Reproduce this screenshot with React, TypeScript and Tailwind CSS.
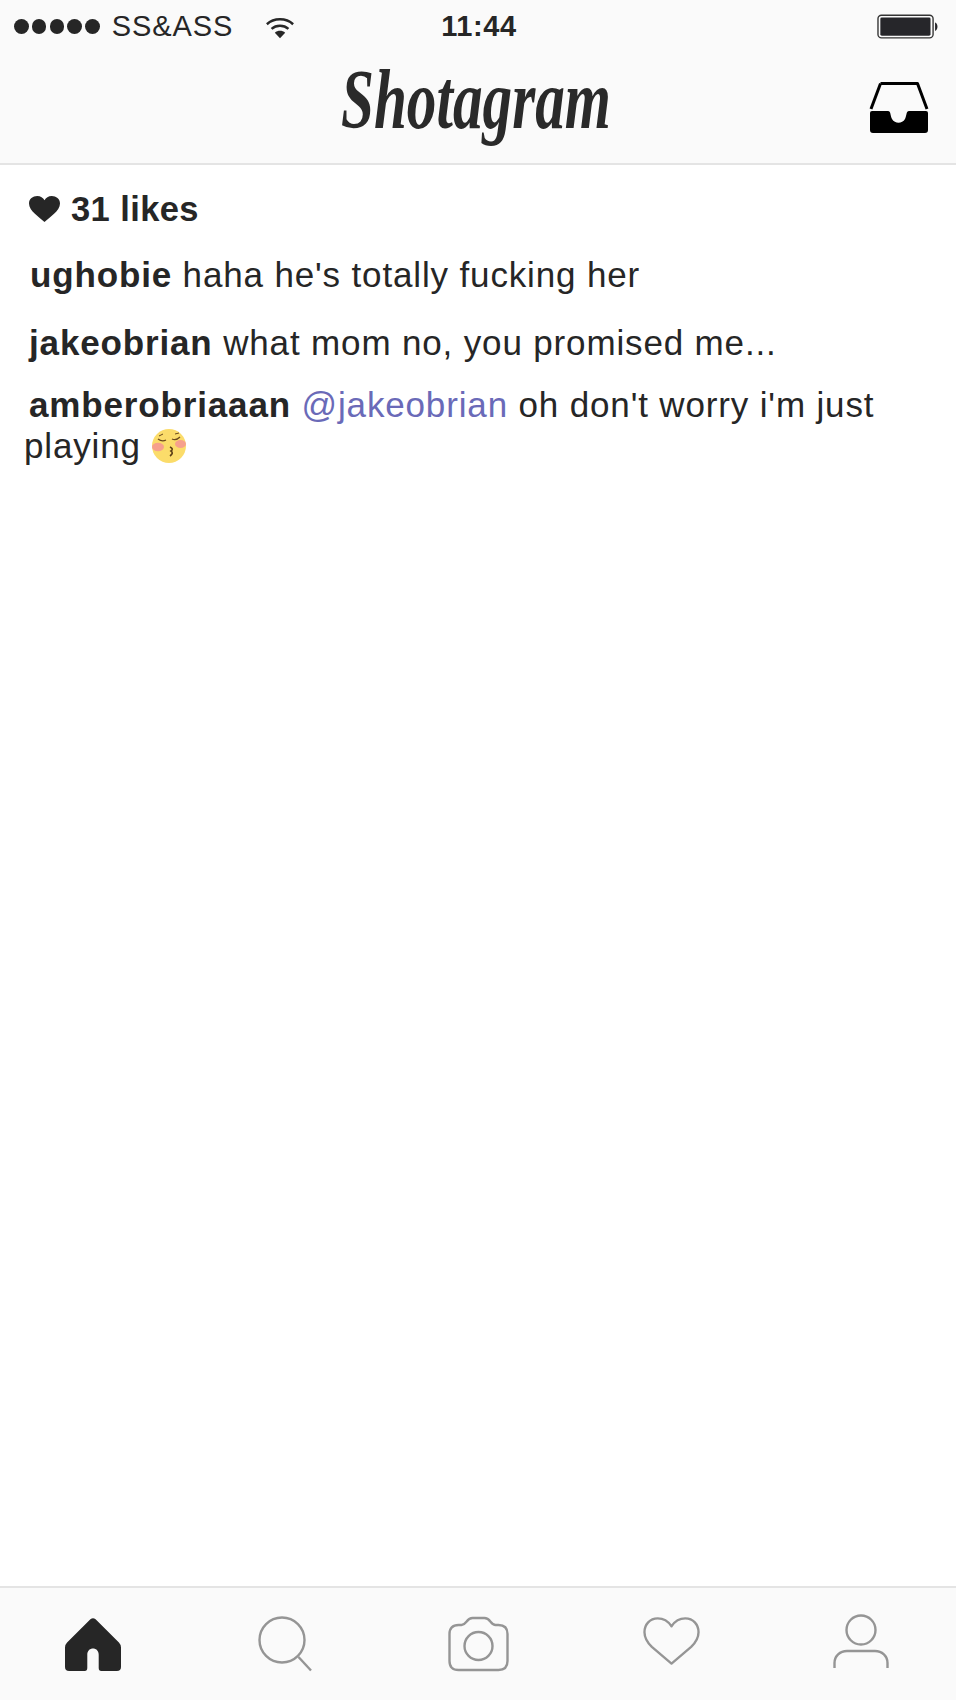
const sans = { fontFamily: '"Liberation Sans", Arial, sans-serif' }

function Wifi() {
  return (
    <svg width="30" height="24" viewBox="0 0 32 24" fill="none" stroke="#262626" strokeWidth="2.6" className="ml-[32px] mt-[2px]">
      <path d="M2 8 C9.5 1 22.5 1 30 8" />
      <path d="M7 13 C12 8.5 20 8.5 25 13" />
      <path d="M10.5 17 L16 23 L21.5 17 C18.5 14.3 13.5 14.3 10.5 17 Z" fill="#262626" stroke="none" />
    </svg>
  )
}

function Battery() {
  return (
    <svg width="61" height="26" viewBox="0 0 62 26">
      <rect x="1" y="1" width="56" height="23" rx="3.5" fill="none" stroke="#333" strokeWidth="1.4" />
      <rect x="3.4" y="3.4" width="51" height="18.4" rx="1.5" fill="#26262a" />
      <path d="M59 8.5 C62 9 62.5 16 59 17 Z" fill="#26262a" />
    </svg>
  )
}

function Inbox() {
  return (
    <svg width="60" height="53" viewBox="0 0 60 53">
      <path d="M11.5 2.5 H48.5 L58 28" fill="none" stroke="#000" strokeWidth="3" strokeLinejoin="round" />
      <path d="M11.5 2.5 L2 28" fill="none" stroke="#000" strokeWidth="3" />
      <path d="M1 32 Q1 30 3 30 H19 C22 30 21 34 23 38 C26 43 33 43 36 38 C38 34 37 30 40 30 H57 Q59 30 59 32 V49 Q59 52 56 52 H4 Q1 52 1 49 Z" fill="#000" />
    </svg>
  )
}

function HomeIcon() {
  return (
    <svg width="56" height="53" viewBox="0 0 54 52" preserveAspectRatio="none" className="mt-[5px] shrink-0">
      <path
        d="M24.5 1.2 Q27 -0.6 29.5 1.2 L52 24 Q54 26 54 29 V48 Q54 52 50 52 H35 Q32.5 52 32.5 49 V36 C32.5 28 21.5 28 21.5 36 V49 Q21.5 52 19 52 H4 Q0 52 0 48 V29 Q0 26 2 24 Z"
        fill="#262626"
      />
    </svg>
  )
}

function SearchIcon() {
  return (
    <svg width="54" height="56" viewBox="0 0 54 56" fill="none" stroke="#959595" strokeWidth="2.4" className="ml-[137px] mt-[3px] shrink-0">
      <circle cx="24" cy="24" r="22.5" />
      <path d="M40.5 41 L53 54.5" />
    </svg>
  )
}

function CameraIcon() {
  return (
    <svg width="61" height="56" viewBox="0 0 60 56" fill="none" stroke="#959595" strokeWidth="2.4" className="ml-[136px] mt-[3px] shrink-0">
      <path d="M10 9 H13 C18 9 18 2 24 2 H36 C42 2 42 9 47 9 H50 Q59 9 59 18 V45 Q59 54 50 54 H10 Q1 54 1 45 V18 Q1 9 10 9 Z" />
      <circle cx="30" cy="30" r="14" />
    </svg>
  )
}

function HeartIcon() {
  return (
    <svg width="57" height="50" viewBox="0 0 58 50" fill="none" stroke="#959595" strokeWidth="2.4" className="ml-[134px] mt-[3px] shrink-0">
      <path d="M29 10 C25 4 20 2 15 2 C7 2 1.5 8 1.5 16 C1.5 22 4 26 9 31 L29 48 L49 31 C54 26 56.5 22 56.5 16 C56.5 8 51 2 43 2 C38 2 33 4 29 10 Z" strokeLinejoin="round" />
    </svg>
  )
}

function PersonIcon() {
  return (
    <svg width="56" height="54" viewBox="0 0 56 54" fill="none" stroke="#959595" strokeWidth="2.4" className="ml-[133px] mt-[1px] shrink-0">
      <circle cx="28" cy="16" r="14.5" />
      <path d="M1.5 54 V49 C1.5 42 7 37 14 37 H42 C49 37 54.5 42 54.5 49 V54" />
    </svg>
  )
}

function KissEmoji() {
  return (
    <svg width="34" height="34" viewBox="0 0 34 34" className="ml-[11px]">
      <circle cx="17" cy="17" r="17" fill="#fbdc6a" />
      <ellipse cx="6" cy="18" rx="6" ry="4.2" fill="#f6a08c" />
      <ellipse cx="28.5" cy="15" rx="5.5" ry="4" fill="#f6a08c" />
      <path d="M6 10 Q10 13 14 11" fill="none" stroke="#6b4a1e" strokeWidth="1.3" />
      <path d="M20 10 Q24 12 28 8" fill="none" stroke="#6b4a1e" strokeWidth="1.3" />
      <path d="M7 7 L11 5" fill="none" stroke="#6b4a1e" strokeWidth="1" />
      <path d="M23 5 L27 4" fill="none" stroke="#6b4a1e" strokeWidth="1" />
      <path d="M18 18 Q22 20 19 22 Q22 24 18 27" fill="none" stroke="#5a3d16" strokeWidth="1.6" />
    </svg>
  )
}

export default function App() {
  return (
    <div className="flex h-[1700px] w-[956px] flex-col bg-white text-[#262626]" style={sans}>
      <header className="h-[165px] shrink-0 border-b-2 border-[#e4e4e4] bg-[#fafafa]">
        <div className="flex h-[52px] items-center pl-[14px] pr-[18px] pt-[1px]">
          <div className="flex gap-[3.3px]">
            {[0, 1, 2, 3, 4].map((i) => (
              <span key={i} className="h-[14.5px] w-[14.5px] rounded-full bg-[#262626]" />
            ))}
          </div>
          <span className="ml-[12px] text-[29px] tracking-[0.9px]">SS&amp;ASS</span>
          <Wifi />
          <span className="ml-[146px] text-[29px] font-bold tracking-[0.6px]">11:44</span>
          <div className="ml-auto">
            <Battery />
          </div>
        </div>
        <div className="flex items-start pl-[341px] pr-[27px]">
          <span
            className="-mt-[2px] block h-[100px] w-[271px] origin-left scale-x-[0.705] whitespace-nowrap text-[84px] leading-[100px] font-bold italic text-[#2a2a2a]"
            style={{ fontFamily: '"Liberation Serif", serif' }}
          >
            Shotagram
          </span>
          <div className="ml-auto mt-[29px]">
            <Inbox />
          </div>
        </div>
      </header>

      <main className="flex-1 text-[35px] tracking-[0.85px]">
        <div className="flex items-center pl-[29px] pt-[24px] text-[34.5px] font-bold tracking-[0.4px]">
          <svg width="31" height="26" viewBox="0 0 32 28" preserveAspectRatio="none">
            <path d="M16 28 C11 23 0 16 0 8 C0 3 4 0 8.5 0 C12 0 14.5 2 16 4.5 C17.5 2 20 0 23.5 0 C28 0 32 3 32 8 C32 16 21 23 16 28 Z" fill="#262626" />
          </svg>
          <span className="ml-[11px] leading-[40px]">31 likes</span>
        </div>
        <p className="mt-[25px] pl-[30px] leading-[41px]">
          <b>ughobie</b> haha he's totally fucking her
        </p>
        <p className="mt-[27px] pl-[29px] leading-[41px]">
          <b>jakeobrian</b> what mom no, you promised me...
        </p>
        <p className="mt-[21px] pl-[29px] leading-[41px]">
          <b>amberobriaaan</b> <span className="text-[#6a6ab8]">@jakeobrian</span> oh don't worry i'm just
        </p>
        <div className="flex items-center pl-[24px]">
          <span className="leading-[41px]">playing</span>
          <KissEmoji />
        </div>
      </main>

      <nav className="flex h-[114px] shrink-0 items-start border-t-2 border-[#e4e4e4] bg-[#fafafa] pl-[65px] pt-[25px]">
        <HomeIcon />
        <SearchIcon />
        <CameraIcon />
        <HeartIcon />
        <PersonIcon />
      </nav>
    </div>
  )
}
